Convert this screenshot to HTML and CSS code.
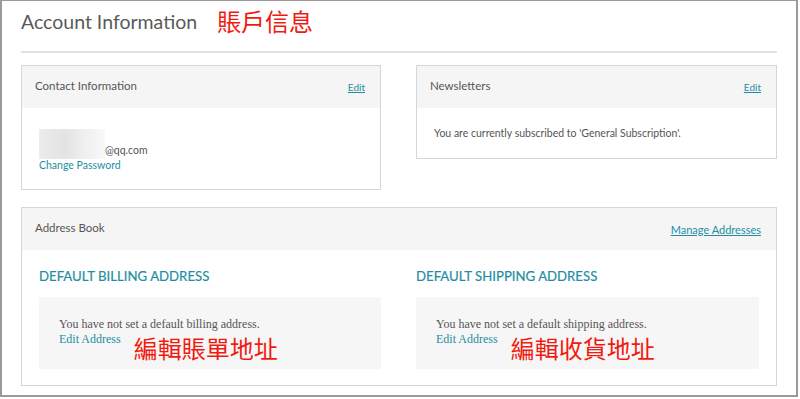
FILE: index.html
```html
<!DOCTYPE html>
<html lang="zh-Hant">
<head>
    <meta charset="UTF-8">
    <title>Account Information</title>
    <link rel="stylesheet" href="styles.css">
</head>
<body>
    <div class="frame">
        <div class="page-title">
            <h1>Account Information</h1>
            <span class="note note-title">賬戶信息</span>
        </div>

        <div class="row">
            <div class="box">
                <div class="box-head">
                    <span>Contact Information</span>
                    <a href="#" class="edit">Edit</a>
                </div>
                <div class="box-body contact">
                    <div class="email"><span class="blur"></span>@qq.com</div>
                    <a href="#" class="link">Change Password</a>
                </div>
            </div>
            <div class="box">
                <div class="box-head">
                    <span>Newsletters</span>
                    <a href="#" class="edit">Edit</a>
                </div>
                <div class="box-body news">
                    You are currently subscribed to 'General Subscription'.
                </div>
            </div>
        </div>

        <div class="box address-book">
            <div class="box-head">
                <span>Address Book</span>
                <a href="#" class="manage">Manage Addresses</a>
            </div>
            <div class="row address-row">
                <div class="address">
                    <h3>DEFAULT BILLING ADDRESS</h3>
                    <div class="address-card">
                        <p>You have not set a default billing address.</p>
                        <div class="card-actions">
                            <a href="#">Edit Address</a>
                            <span class="note note-card">編輯賬單地址</span>
                        </div>
                    </div>
                </div>
                <div class="address">
                    <h3>DEFAULT SHIPPING ADDRESS</h3>
                    <div class="address-card">
                        <p>You have not set a default shipping address.</p>
                        <div class="card-actions">
                            <a href="#">Edit Address</a>
                            <span class="note note-card">編輯收貨地址</span>
                        </div>
                    </div>
                </div>
            </div>
        </div>
    </div>
</body>
</html>
```

FILE: styles.css
```css
body {
    margin: 0;
    font-family: Lato, "Open Sans", sans-serif;
    color: #555;
    background: #fff;
}
.frame {
    width: 798px;
    height: 397px;
    border: 2px solid #9a9a9a;
    border-top-width: 1px;
    padding: 0 19px;
    box-sizing: border-box;
}
.page-title {
    display: flex;
    align-items: center;
    gap: 20px;
    height: 40px;
    border-bottom: 2px solid #e2e2e2;
    margin-bottom: 12px;
    padding-bottom: 10px;
}
h1 {
    margin: 0;
    font-size: 19.5px;
    font-weight: 400;
    color: #5a5a5a;
}
.note {
    color: #f01a10;
    font-family: "Noto Sans CJK TC", "Noto Sans CJK SC", sans-serif;
}
.note-title {
    font-size: 24px;
    line-height: 1;
}
.row {
    display: grid;
    grid-template-columns: 360px 361px;
    gap: 35px;
    align-items: start;
}
.box {
    border: 1px solid #d6d6d6;
}
.box-head {
    display: flex;
    justify-content: space-between;
    align-items: center;
    background: #f5f5f5;
    height: 42px;
    box-sizing: border-box;
    padding: 0 15px 4px 13px;
    font-size: 11.5px;
    color: #555;
}
.edit, .manage {
    color: #1f8ea3;
    font-size: 10px;
    margin-top: 4px;
}
.manage {
    font-size: 11px;
}
.box-body {
    padding: 0 17px;
    font-size: 10.5px;
}
.contact {
    height: 81px;
    padding-top: 18px;
    box-sizing: border-box;
}
.email {
    display: flex;
    align-items: flex-end;
    color: #555;
    height: 30px;
}
.blur {
    display: inline-block;
    width: 66px;
    height: 30px;
    background: linear-gradient(to right, #ececec, #e3e3e3 40%, #f0f0f0 70%, #f8f8f8);
    margin-bottom: -3px;
}
.link {
    display: block;
    color: #1f8ea3;
    text-decoration: none;
    margin-top: 3px;
}
.news {
    height: 50px;
    display: flex;
    align-items: center;
    color: #555;
}
.address-book {
    margin-top: 17px;
    height: 179px;
    box-sizing: border-box;
}
.address-row {
    padding: 0 16px 0 17px;
    grid-template-columns: 342px 343px;
    gap: 35px;
}
.address h3 {
    margin: 18px 0 13px;
    font-size: 13.2px;
    font-weight: 400;
    color: #1f8ea3;
    -webkit-text-stroke: 0.2px #1f8ea3;
}
.address-card {
    background: #f6f6f6;
    height: 72px;
    padding: 21px 20px 0;
    box-sizing: border-box;
    font-family: "Liberation Serif", serif;
    font-size: 12px;
}
.address-card p {
    margin: 0;
    color: #555;
    line-height: 13px;
}
.card-actions {
    display: flex;
    align-items: flex-start;
    gap: 13px;
    line-height: 14px;
}
.address-card a {
    color: #1f8ea3;
    text-decoration: none;
    margin-top: 1px;
}
.note-card {
    font-size: 24px;
    line-height: 1;
    margin-top: 5px;
}
```
